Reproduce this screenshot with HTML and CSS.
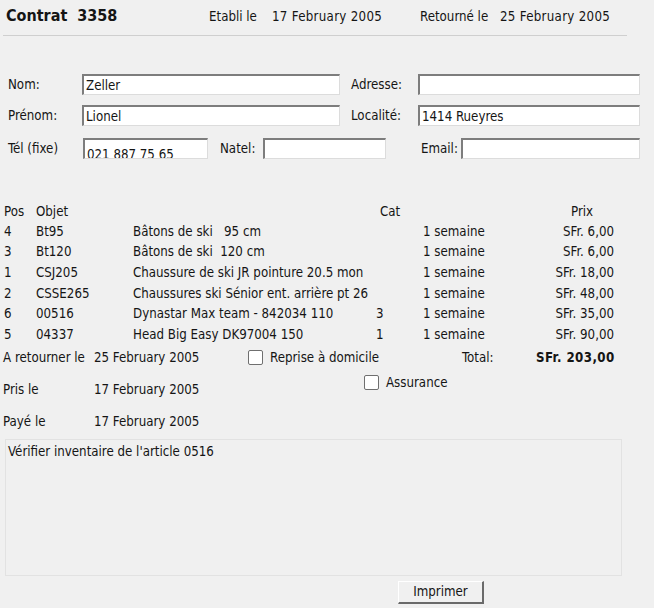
FILE: index.html
```html
<!DOCTYPE html>
<html>
<head>
<meta charset="utf-8">
<link rel="stylesheet" href="styles.css">
</head>
<body>
<div class="page">
  <header class="head">
    <div class="title">Contrat&nbsp; 3358</div>
    <div class="h-lab h-etabli">Etabli le</div>
    <div class="h-val h-etabli-v">17 February 2005</div>
    <div class="h-lab h-ret">Retourné le</div>
    <div class="h-val">25 February 2005</div>
  </header>

  <section class="form">
    <div class="frow">
      <label class="lab w-lab1">Nom:</label>
      <div class="field w-nom">Zeller</div>
      <label class="lab w-lab2">Adresse:</label>
      <div class="field w-adr"></div>
    </div>
    <div class="frow">
      <label class="lab w-lab1">Prénom:</label>
      <div class="field w-nom">Lionel</div>
      <label class="lab w-lab2">Localité:</label>
      <div class="field w-adr">1414 Rueyres</div>
    </div>
    <div class="frow">
      <label class="lab w-lab3">Tél (fixe)</label>
      <div class="field w-tel cut">021 887 75 65</div>
      <label class="lab w-natel">Natel:</label>
      <div class="field w-natf"></div>
      <label class="lab w-email">Email:</label>
      <div class="field w-emf"></div>
    </div>
  </section>

  <table class="items">
    <thead>
      <tr><th class="c-pos">Pos</th><th class="c-code">Objet</th><th class="c-desc"></th><th class="c-cat hcat">Cat</th><th class="c-per"></th><th class="c-prix hprix">Prix</th></tr>
    </thead>
    <tbody>
      <tr><td class="c-pos">4</td><td class="c-code">Bt95</td><td class="c-desc">Bâtons de ski &nbsp; 95 cm</td><td class="c-cat"></td><td class="c-per">1 semaine</td><td class="c-prix">SFr. 6,00</td></tr>
      <tr><td class="c-pos">3</td><td class="c-code">Bt120</td><td class="c-desc">Bâtons de ski &nbsp;120 cm</td><td class="c-cat"></td><td class="c-per">1 semaine</td><td class="c-prix">SFr. 6,00</td></tr>
      <tr><td class="c-pos">1</td><td class="c-code">CSJ205</td><td class="c-desc">Chaussure de ski JR pointure 20.5 mon</td><td class="c-cat"></td><td class="c-per">1 semaine</td><td class="c-prix">SFr. 18,00</td></tr>
      <tr><td class="c-pos">2</td><td class="c-code">CSSE265</td><td class="c-desc">Chaussures ski Sénior ent. arrière pt 26</td><td class="c-cat"></td><td class="c-per">1 semaine</td><td class="c-prix">SFr. 48,00</td></tr>
      <tr><td class="c-pos">6</td><td class="c-code">00516</td><td class="c-desc">Dynastar Max team - 842034 110</td><td class="c-cat">3</td><td class="c-per">1 semaine</td><td class="c-prix">SFr. 35,00</td></tr>
      <tr><td class="c-pos">5</td><td class="c-code">04337</td><td class="c-desc">Head Big Easy DK97004 150</td><td class="c-cat">1</td><td class="c-per">1 semaine</td><td class="c-prix">SFr. 90,00</td></tr>
    </tbody>
  </table>

  <section class="summary">
    <div class="sum-left">
      <div class="sline"><span class="s-lab">A retourner le</span><span>25 February 2005</span></div>
      <div class="sline"><span class="s-lab">Pris le</span><span>17 February 2005</span></div>
      <div class="sline"><span class="s-lab">Payé le</span><span>17 February 2005</span></div>
    </div>
    <div class="sum-right">
      <div class="sline r1">
        <span class="chk"></span><span class="reprise">Reprise à domicile</span>
        <span class="total-lab">Total:</span><span class="total">SFr. 203,00</span>
      </div>
      <div class="sline r2"><span class="chk"></span><span>Assurance</span></div>
    </div>
  </section>

  <div class="notes">Vérifier inventaire de l'article 0516</div>

  <div class="actions"><button class="btn">Imprimer</button></div>
</div>
<div class="bottom"></div>
</body>
</html>
```

FILE: styles.css
```css
html, body {
  margin: 0;
  padding: 0;
  background: #f0f0f0;
}
body {
  width: 654px;
  height: 614px;
  overflow: hidden;
  font-family: "DejaVu Sans Condensed", "DejaVu Sans", sans-serif;
  font-stretch: condensed;
  font-size: 13.2px;
  color: #151515;
}
.page {
  height: 608px;
  position: relative;
}
.bottom {
  height: 6px;
  background: #ffffff;
}

/* header */
.head {
  display: flex;
  align-items: baseline;
  height: 36px;
  margin: 0 27px 0 3px;
  border-bottom: 1px solid #cfcfcf;
  box-sizing: border-box;
  padding-top: 6px;
}
.title {
  font-weight: bold;
  font-size: 16px;
  width: 203px;
  padding-left: 3px;
}
.h-val { letter-spacing: 0.3px; }
.h-etabli { width: 63px; }
.h-etabli-v { width: 148px; }
.h-ret { width: 80px; }

/* form */
.form {
  padding: 38px 0 0 8px;
  display: flex;
  flex-direction: column;
  gap: 10px;
}
.frow {
  display: flex;
  align-items: center;
  height: 21px;
}
.frow:nth-child(3) { margin-top: 2px; }
.lab { display: block; }
.w-lab1 { width: 74px; }
.w-lab2 { width: 67px; margin-left: 11px; }
.w-lab3 { width: 75px; }
.w-natel { width: 43px; margin-left: 12px; }
.w-email { width: 40px; margin-left: 35px; }
.field {
  height: 21px;
  box-sizing: border-box;
  background: #ffffff;
  border-top: 2px solid #7d7d7d;
  border-left: 2px solid #7d7d7d;
  border-right: 1px solid #dcdcdc;
  border-bottom: 1px solid #dcdcdc;
  padding: 1px 2px 0 2px;
  line-height: 17px;
  white-space: nowrap;
  overflow: hidden;
}
.cut { line-height: 27px; }
.w-nom { width: 258px; }
.w-adr { width: 222px; }
.w-tel { width: 125px; }
.w-natf { width: 123px; }
.w-emf { width: 179px; }

/* table */
.items {
  margin-top: 43px;
  border-collapse: collapse;
  table-layout: fixed;
  width: 614px;
}
.items th, .items td {
  padding: 0;
  font-weight: normal;
  text-align: left;
  white-space: nowrap;
  overflow: visible;
}
.items thead tr { height: 19px; }
.items tbody tr { height: 20.6px; }
.c-pos { width: 32px; padding-left: 4px !important; }
.c-code { width: 97px; }
.c-desc { width: 243px; }
.c-cat { width: 39px; }
.hcat { padding-left: 4px !important; }
.c-per { width: 111px; padding-left: 4px !important; }
.c-prix { text-align: right !important; }
.hprix { text-align: left !important; padding-left: 37px !important; }

/* summary */
.summary {
  display: flex;
  padding-top: 4px;
}
.sum-left {
  width: 248px;
  display: flex;
  flex-direction: column;
  gap: 14px;
  padding-left: 3px;
  box-sizing: border-box;
}
.sline {
  display: flex;
  align-items: center;
  height: 18px;
  line-height: 18px;
}
.s-lab { width: 91px; }
.sum-right {
  display: flex;
  flex-direction: column;
  gap: 7px;
}
.chk {
  width: 13px;
  height: 13px;
  border: 1px solid #6f6f6f;
  border-radius: 2px;
  background: #ffffff;
  margin-right: 7px;
  flex: none;
}
.reprise { width: 192px; }
.total-lab { width: 74px; }
.total { font-weight: bold; letter-spacing: 0.4px; }
.r2 { margin-left: 116px; }

/* notes */
.notes {
  margin: 8px 0 0 5px;
  width: 617px;
  height: 137px;
  box-sizing: border-box;
  border: 1px solid #e2e2e2;
  padding: 3px 2px;
  line-height: 18px;
}

/* button */
.actions {
  display: flex;
  padding: 5px 0 0 398px;
}
.btn {
  width: 86px;
  height: 23px;
  font: inherit;
  color: #151515;
  background: #f0f0f0;
  border-top: 1px solid #ffffff;
  border-left: 1px solid #ffffff;
  border-right: 2px solid #6a6a6a;
  border-bottom: 2px solid #6a6a6a;
  padding: 0;
}
```
